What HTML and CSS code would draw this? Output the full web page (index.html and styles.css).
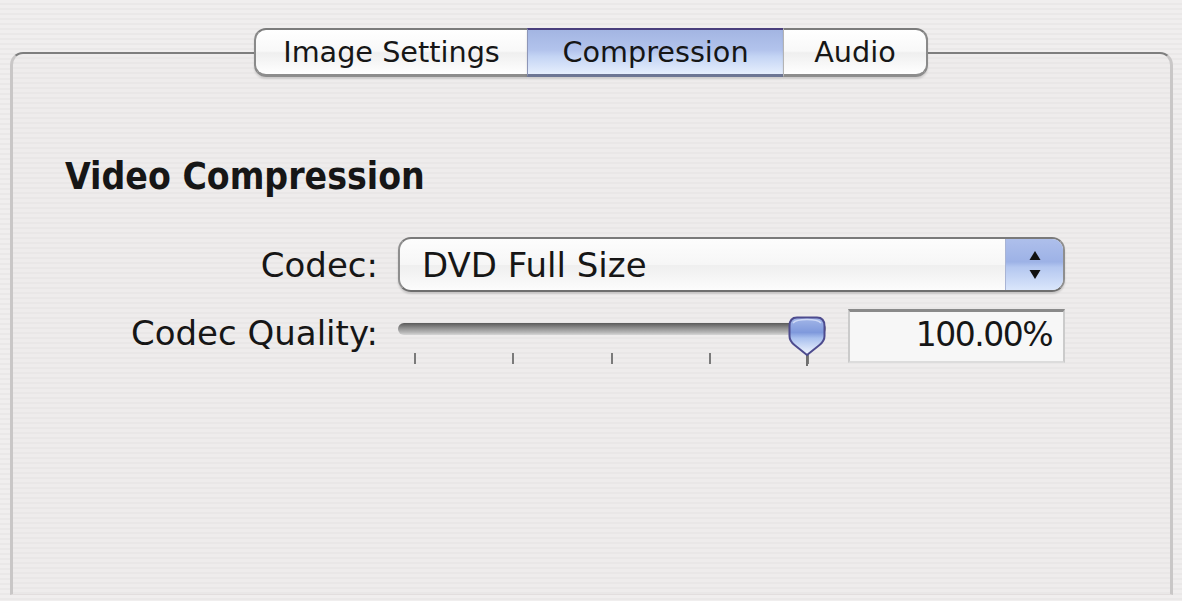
FILE: index.html
```html
<!DOCTYPE html>
<html lang="en">
<head>
<meta charset="utf-8">
<title>Compression</title>
<link rel="stylesheet" href="styles.css">
</head>
<body>
<div class="window">
  <div class="tabs">
    <div class="tab">Image Settings</div>
    <div class="tab tab-selected">Compression</div>
    <div class="tab">Audio</div>
  </div>
  <div class="panel">
    <h1 class="heading">Video Compression</h1>
    <div class="form">
      <div class="label label-codec">Codec:</div>
      <div class="popup">
        <span class="popup-text">DVD Full Size</span>
        <span class="stepper">
          <svg width="16" height="32" viewBox="0 0 16 32"><path d="M8 2 L13.5 11 L2.5 11 Z" fill="#111"/><path d="M2.5 21 L13.5 21 L8 30 Z" fill="#111"/></svg>
        </span>
      </div>
      <div class="label label-quality">Codec Quality:</div>
      <div class="quality">
        <div class="slider">
          <div class="track"></div>
          <div class="ticks"><i></i><i></i><i></i><i></i><i></i></div>
          <svg class="knob" width="38" height="50" viewBox="0 0 38 50">
            <defs>
              <linearGradient id="kg" x1="0" y1="0" x2="0" y2="1">
                <stop offset="0" stop-color="#a4b7e8"/>
                <stop offset="0.4" stop-color="#7f99dc"/>
                <stop offset="0.55" stop-color="#a9c0ee"/>
                <stop offset="1" stop-color="#f4f8ff"/>
              </linearGradient>
            </defs>
            <rect x="18" y="38" width="2" height="12" fill="#6f6f6f"/>
            <path d="M9 1.5 H29 Q36.5 1.5 36.5 10 V20 Q36.5 25 31.5 29 L19 39 L6.5 29 Q1.5 25 1.5 20 V10 Q1.5 1.5 9 1.5 Z" fill="url(#kg)" stroke="#4d4b8e" stroke-width="2"/>
            <path d="M5 7 Q8 3.5 19 3.5 Q30 3.5 33 7" fill="none" stroke="#cfdaf6" stroke-width="1.5"/>
          </svg>
        </div>
        <div class="field">100.00%</div>
      </div>
    </div>
  </div>
</div>
</body>
</html>
```

FILE: styles.css
```css
html, body {
  margin: 0;
  padding: 0;
}

body {
  width: 1182px;
  height: 601px;
  overflow: hidden;
  font-family: "DejaVu Sans", "Liberation Sans", sans-serif;
  color: #161616;
  background: repeating-linear-gradient(to bottom, #f0eeee 0px, #f0eeee 3px, #eae8e8 3px, #eae8e8 5px);
}

.window {
  padding-top: 28px;
  height: 601px;
  box-sizing: border-box;
}

.tabs {
  display: flex;
  justify-content: center;
  position: relative;
  z-index: 1;
  height: 49px;
}

.tab {
  height: 49px;
  box-sizing: border-box;
  padding: 0;
  text-align: center;
  font-size: 28.7px;
  line-height: 44px;
  border-top: 2px solid #7c7c7c;
  border-bottom: 3px solid #8d8d8d;
  border-left: 1px solid #b4b4b4;
  background: linear-gradient(to bottom, #ffffff 0%, #f8f8f8 48%, #efefef 52%, #ffffff 100%);
  box-shadow: 0 2px 2px rgba(0, 0, 0, 0.12);
}

.tab:first-child {
  border-left: 2px solid #8a8a8a;
  border-radius: 12px 0 0 12px;
  width: 273px;
}

.tab:last-child {
  border-right: 2px solid #8a8a8a;
  border-radius: 0 12px 12px 0;
  width: 145px;
}

.tab-selected {
  width: 256px;
  border-top-color: #4a3f7d;
  border-bottom-color: #6d7694;
  border-left-color: #8d96b8;
  background: linear-gradient(to bottom, #a3b5e2 0%, #b2c3ec 45%, #c4d4f4 60%, #e6effd 100%);
}

.panel {
  margin: -25px 9px 0 10px;
  height: 543px;
  box-sizing: border-box;
  border-top: 2px solid #7e7e7e;
  border-left: 3px solid #c9c7c7;
  border-right: 3px solid #c9c7c7;
  border-bottom: 1px solid #e2dede;
  border-radius: 13px 13px 0 0;
  padding-top: 101px;
  background: repeating-linear-gradient(to bottom, #eeecec 0px, #eeecec 3px, #e9e7e7 3px, #e9e7e7 5px);
}

.heading {
  margin: 0 0 38px 52px;
  font-size: 37px;
  line-height: 44px;
  font-weight: bold;
  font-family: "DejaVu Sans Condensed", "DejaVu Sans", sans-serif;
  font-stretch: condensed;
}

.form {
  display: grid;
  grid-template-columns: 365px 667px;
  column-gap: 20px;
  row-gap: 17px;
  align-items: center;
}

.label {
  text-align: right;
  font-size: 34px;
  line-height: 40px;
  white-space: nowrap;
}

.label-quality {
  align-self: start;
  margin-top: 4px;
}

.popup {
  height: 55px;
  box-sizing: border-box;
  display: flex;
  align-items: center;
  border: 2px solid #8e8e8e;
  border-top-color: #7a7a7a;
  border-bottom-color: #6e6e6e;
  border-radius: 13px;
  overflow: hidden;
  background: linear-gradient(to bottom, #fdfdfd 0%, #f6f6f6 50%, #efefef 52%, #fcfcfc 100%);
  box-shadow: 0 2px 2px rgba(0, 0, 0, 0.15);
}

.popup-text {
  flex: 1;
  padding-left: 22px;
  font-size: 34px;
  line-height: 40px;
}

.stepper {
  width: 57px;
  height: 100%;
  display: flex;
  align-items: center;
  justify-content: center;
  border-left: 1px solid #a9b4d4;
  background: linear-gradient(to bottom, #aebfeb 0%, #9db2e6 45%, #b4c7f0 55%, #dae6fb 100%);
}

.quality {
  display: flex;
  align-items: flex-start;
  gap: 22px;
  height: 54px;
}

.slider {
  position: relative;
  width: 428px;
  height: 54px;
}

.track {
  margin-top: 14px;
  height: 12px;
  border-radius: 6px;
  background: linear-gradient(to bottom, #5a5a5a 0%, #868686 35%, #b9b9b9 80%, #d6d6d6 100%);
}

.ticks {
  display: flex;
  justify-content: space-between;
  margin: 18px 0 0 16px;
  width: 395px;
}

.ticks i {
  display: block;
  width: 2px;
  height: 11px;
  background: #7a7a7a;
}

.knob {
  position: absolute;
  left: 390px;
  top: 7px;
}

.field {
  width: 217px;
  height: 54px;
  box-sizing: border-box;
  border-top: 3px solid #8a8a8a;
  border-left: 2px solid #cbcbcb;
  border-right: 2px solid #cbcbcb;
  border-bottom: 2px solid #dcdcdc;
  background: #f7f7f7;
  text-align: right;
  padding-right: 11px;
  font-size: 33px;
  letter-spacing: -1.5px;
  line-height: 46px;
}
```
